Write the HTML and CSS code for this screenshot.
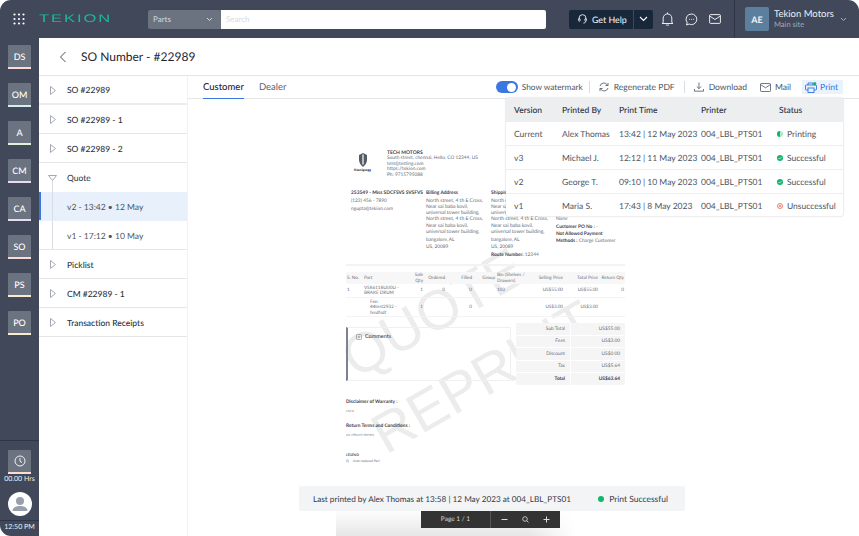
FILE: index.html
```html
<!DOCTYPE html>
<html>
<head>
    <title>SO Number - #22989</title>
    <link rel="stylesheet" href="styles.css">
</head>
<body>
<div class="app">
    <header class="topbar">
        <svg class="apps" width="12" height="12" viewBox="0 0 12 12" fill="#fff">
            <circle cx="1.5" cy="1.5" r="1.1"/><circle cx="6" cy="1.5" r="1.1"/><circle cx="10.5" cy="1.5" r="1.1"/>
            <circle cx="1.5" cy="6" r="1.1"/><circle cx="6" cy="6" r="1.1"/><circle cx="10.5" cy="6" r="1.1"/>
            <circle cx="1.5" cy="10.5" r="1.1"/><circle cx="6" cy="10.5" r="1.1"/><circle cx="10.5" cy="10.5" r="1.1"/>
        </svg>
        <div class="logo"><span>TEKION</span></div>
        <div class="search">
            <div class="search-type">Parts
                <svg width="7" height="5" viewBox="0 0 7 5" fill="none" stroke="#d5d8de"><path d="M1 1l2.5 2.5L6 1"/></svg>
            </div>
            <div class="search-input">Search</div>
        </div>
        <div class="help">
            <div class="help-main">
                <svg width="9" height="12" viewBox="0 0 10 12" fill="none" stroke="#e8eaee" stroke-width="1"><path d="M1.2 7V5a3.8 3.8 0 0 1 7.6 0v2"/><rect x=".7" y="5.5" width="1.6" height="3" rx=".7"/><rect x="7.7" y="5.5" width="1.6" height="3" rx=".7"/><path d="M8.5 8.5c0 1.5-1 2-2.5 2"/></svg>
                Get Help
            </div>
            <div class="help-arrow">
                <svg width="9" height="6" viewBox="0 0 9 6" fill="none" stroke="#fff" stroke-width="1.1"><path d="M1 1l3.5 3.5L8 1"/></svg>
            </div>
        </div>
        <div class="top-icons">
            <svg width="13" height="14" viewBox="0 0 13 14" fill="none" stroke="#fff" stroke-width=".9"><path d="M2.2 10.5V6.2a4.3 4.3 0 0 1 8.6 0v4.3l1.2 1H1z"/><path d="M5 12.5c.5 1 2.5 1 3 0"/><path d="M6.5 1.900V.5"/></svg>
            <svg width="13" height="13" viewBox="0 0 13 13" fill="none" stroke="#fff" stroke-width=".9"><path d="M6.5 1a5.300 5.300 0 0 1 0 10.600c-.9 0-1.700-.2-2.400-.6L1.500 12l.7-2.400A5.300 5.300 0 0 1 6.500 1z"/><path d="M4 6.300h.8M6.100 6.300h.8M8.200 6.300H9"/></svg>
            <svg width="12" height="10" viewBox="0 0 12 10" fill="none" stroke="#fff" stroke-width=".9"><rect x=".6" y=".6" width="10.800" height="8.800" rx="1"/><path d="M.6 2l5.400 3.500L11.400 2"/></svg>
        </div>
        <div class="dealer">
            <div class="dealer-badge">AE</div>
            <div class="dealer-text">
                <div class="dealer-name">Tekion Motors</div>
                <div class="dealer-site">Main site</div>
            </div>
            <svg width="7" height="5" viewBox="0 0 7 5" fill="none" stroke="#aab0ba"><path d="M1 1l2.500 2.500L6 1"/></svg>
        </div>
    </header>

    <div class="body-row">
        <nav class="sidebar">
            <div class="side-links">
                <a class="side-link pink">DS</a>
                <a class="side-link teal">OM</a>
                <a class="side-link green">A</a>
                <a class="side-link lilac">CM</a>
                <a class="side-link lilac">CA</a>
                <a class="side-link pink">SO</a>
                <a class="side-link cream">PS</a>
                <a class="side-link cream">PO</a>
            </div>
            <div class="side-bottom">
                <a class="side-link pink">
                    <svg width="12" height="12" viewBox="0 0 12 12" fill="none" stroke="#fff" stroke-width=".9"><circle cx="6" cy="6" r="5"/><path d="M6 3v3.200l2 1.300"/></svg>
                </a>
                <div class="hrs">00.00 Hrs</div>
                <div class="user">
                    <svg width="24" height="24" viewBox="0 0 24 24" fill="#9aa0ab"><circle cx="12" cy="9" r="4"/><path d="M4.500 19c0-3.500 3.500-5 7.500-5s7.500 1.500 7.500 5z"/></svg>
                </div>
                <div class="clock">12:50 PM</div>
            </div>
        </nav>

        <main class="content">
            <div class="page-head">
                <svg width="8" height="12" viewBox="0 0 8 12" fill="none" stroke="#444f5f" stroke-width="1"><path d="M6.500 1L1.500 6l5 5"/></svg>
                <h1>SO Number - #22989</h1>
            </div>
            <div class="page-body">
                <aside class="tree">
                    <div class="tree-row first"><svg class="tri" width="6" height="9" viewBox="0 0 6 9"><path d="M.5.5l5 4-5 4z"/></svg>SO #22989</div>
                    <div class="tree-row"><svg class="tri" width="6" height="9" viewBox="0 0 6 9"><path d="M.5.5l5 4-5 4z"/></svg>SO #22989 - 1</div>
                    <div class="tree-row"><svg class="tri" width="6" height="9" viewBox="0 0 6 9"><path d="M.5.5l5 4-5 4z"/></svg>SO #22989 - 2</div>
                    <div class="tree-row open"><svg class="tri-down" width="9" height="6" viewBox="0 0 9 6"><path d="M.5.500h8l-4 5z"/></svg>Quote</div>
                    <div class="tree-row sub active">v2 - 13:42 • 12 May</div>
                    <div class="tree-row sub">v1 - 17:12 • 10 May</div>
                    <div class="tree-row"><svg class="tri" width="6" height="9" viewBox="0 0 6 9"><path d="M.5.5l5 4-5 4z"/></svg>Picklist</div>
                    <div class="tree-row"><svg class="tri" width="6" height="9" viewBox="0 0 6 9"><path d="M.5.5l5 4-5 4z"/></svg>CM #22989 - 1</div>
                    <div class="tree-row"><svg class="tri" width="6" height="9" viewBox="0 0 6 9"><path d="M.5.5l5 4-5 4z"/></svg>Transaction Receipts</div>
                </aside>

                <section class="viewer">
                    <div class="tabbar">
                        <a class="tab on">Customer</a>
                        <a class="tab">Dealer</a>
                        <div class="actions">
                            <span class="toggle"><span class="knob"></span></span>
                            <span class="act watermark">Show watermark</span>
                            <span class="act-sep sep-a"></span>
                            <span class="act">
                                <svg width="10" height="10" viewBox="0 0 10 10" fill="none" stroke="#4b5563" stroke-width=".8"><path d="M1 4a4 4 0 0 1 7-1.500L9 3.500M9 1v2.500H6.500"/><path d="M9 6a4 4 0 0 1-7 1.500L1 6.500M1 9V6.500h2.500"/></svg>
                                Regenerate PDF
                            </span>
                            <span class="act-sep sep-b"></span>
                            <span class="act">
                                <svg width="10" height="10" viewBox="0 0 10 10" fill="none" stroke="#4b5563" stroke-width=".8"><path d="M5 .5v6M2.800 4.500L5 6.700l2.200-2.200M.5 7v2.200h9V7"/></svg>
                                Download
                            </span>
                            <span class="act mail">
                                <svg width="11" height="9" viewBox="0 0 11 9" fill="none" stroke="#4b5563" stroke-width=".8"><rect x=".5" y=".5" width="10" height="8" rx=".8"/><path d="M.5 1.500l5 3.300 5-3.300"/></svg>
                                Mail
                            </span>
                            <span class="act print">
                                <svg width="12" height="11" viewBox="0 0 12 11" fill="none" stroke="#2f74e0" stroke-width=".9"><path d="M3 3V1h5v2"/><rect x=".5" y="3" width="11" height="5" rx="1"/><rect x="3" y="6" width="6" height="4.500" fill="#eaf2fd"/><circle cx="9.700" cy="1.800" r="1.700" fill="#12b76a" stroke="none"/></svg>
                                Print
                            </span>
                        </div>
                    </div>

                    <div class="doc-area">
                        <div class="mark mark-quote">QUOTE</div>
                        <div class="mark mark-reprint">REPRINT</div>
                        <div class="doc">
                            <div class="doc-head">
                                <div class="doc-logo">
                                    <svg width="8" height="14" viewBox="0 0 8 14" fill="#555b66"><path d="M4 0l4 2v5c0 3-2 5-4 7-2-2-4-4-4-7V2z"/><path d="M3.400 1.500h1.200v10H3.400z" fill="#fff"/></svg>
                                    <b>Koenigsegg</b>
                                </div>
                                <div class="doc-org">
                                    <b>TECH MOTORS</b>
                                    <div>South street, chennai, Hello, CO 12344, US</div>
                                    <div>tets@testing.com</div>
                                    <div>https://tekion.com</div>
                                    <div>Ph: 9715795088</div>
                                </div>
                            </div>
                            <div class="doc-cols">
                                <div class="doc-col">
                                    <b>253549 - Miss SDCFSVS SVSFVS</b>
                                    <p class="gap-a">(123) 456 - 7890</p>
                                    <p class="gap-b">ngupta@tekion.com</p>
                                </div>
                                <div class="doc-col">
                                    <b>Billing Address</b>
                                    <div class="addr">
                                        <div>North street, 4 th E Cross,</div>
                                        <div>Near sai baba kovil,</div>
                                        <div>universal tower building,</div>
                                        <div>North street, 4 th E Cross,</div>
                                        <div>Near sai baba kovil,</div>
                                        <div>universal tower building,</div>
                                    </div>
                                    <p class="gap-b">bangalore, AL</p>
                                    <p class="gap-b">US, 20089</p>
                                </div>
                                <div class="doc-col">
                                    <b>Shipping Address</b>
                                    <div class="addr">
                                        <div>North street, 4 th E Cross,</div>
                                        <div>Near sai baba kovil,</div>
                                        <div>universal tower building,</div>
                                        <div>North street, 4 th E Cross,</div>
                                        <div>Near sai baba kovil,</div>
                                        <div>universal tower building,</div>
                                    </div>
                                    <p class="gap-b">bangalore, AL</p>
                                    <p class="gap-b">US, 20089</p>
                                    <p class="gap-b"><b>Route Number:</b> 12344</p>
                                </div>
                                <div class="doc-col last">
                                    <p>None</p>
                                    <p class="gap-b"><b>Customer PO No :</b> -</p>
                                    <p class="gap-b"><b>Not Allowed Payment</b></p>
                                    <p class="gap-c"><b>Methods :</b> Charge Customer</p>
                                </div>
                            </div>
                            <div class="doc-rule"></div>
                            <table class="parts">
                                <tr class="parts-head">
                                    <th class="c-no">S. No.</th><th class="c-part">Part</th><th class="num c-qty">Sale<br>Qty</th><th class="num c-ord">Ordered</th><th class="num c-fil">Filled</th><th class="num c-grp">Group</th><th class="c-bin">Bin (Shelves /<br>Drawers)</th><th class="num c-sell">Selling Price</th><th class="num c-tot">Total Price</th><th class="num c-ret">Return Qty</th>
                                </tr>
                                <tr>
                                    <td>1</td><td>VSX6118UIJ0U -<br>BRAKE DRUM</td><td class="num">1</td><td class="num">0</td><td class="num">0</td><td></td><td>103</td><td class="num">US$55.00</td><td class="num">US$55.00</td><td class="num">0</td>
                                </tr>
                                <tr>
                                    <td></td><td class="fee">Fee:<br>44test2932 -<br>fesdfsdf</td><td class="num">1</td><td></td><td class="num">0</td><td></td><td></td><td class="num">US$3.00</td><td class="num">US$3.00</td><td></td>
                                </tr>
                            </table>
                            <div class="doc-sum">
                                <div class="comments">
                                    <svg width="6" height="6" viewBox="0 0 6 6" fill="none" stroke="#666" stroke-width=".5"><rect x=".5" y=".5" width="5" height="5" rx=".8"/><path d="M1.800 2.300h2.400M1.800 3.700h2.400"/></svg>
                                    Comments
                                </div>
                                <div class="totals">
                                    <div class="tot-row"><span>Sub Total</span><span>US$55.00</span></div>
                                    <div class="tot-row"><span>Fees</span><span>US$3.00</span></div>
                                    <div class="tot-row"><span>Discount</span><span>US$0.00</span></div>
                                    <div class="tot-row"><span>Tax</span><span>US$5.64</span></div>
                                    <div class="tot-row grand"><span>Total</span><span>US$63.64</span></div>
                                </div>
                            </div>
                            <div class="doc-notes">
                                <b>Disclaimer of Warranty :</b>
                                <p>csca</p>
                                <b>Return Terms and Conditions :</b>
                                <p>us return terms</p>
                                <b class="legend">LEGEND</b>
                                <div class="legend-row"><span>Q</span>Auto replaced Part</div>
                            </div>
                        </div>
                        <div class="page-fade"></div>
                    </div>

                    <div class="print-pop">
                        <table>
                            <tr><th>Version</th><th>Printed By</th><th>Print Time</th><th>Printer</th><th>Status</th></tr>
                            <tr><td>Current</td><td>Alex Thomas</td><td>13:42 | 12 May 2023</td><td>004_LBL_PTS01</td><td><svg class="st" width="6" height="6" viewBox="0 0 6 6"><circle cx="3" cy="3" r="3" fill="#a9ecc9"/><path d="M3 0a3 3 0 0 0 0 6z" fill="#12b76a"/></svg>Printing</td></tr>
                            <tr><td>v3</td><td>Michael J.</td><td>12:12 | 11 May 2023</td><td>004_LBL_PTS01</td><td><svg class="st" width="6" height="6" viewBox="0 0 6 6"><circle cx="3" cy="3" r="3" fill="#12b76a"/><path d="M1.600 3.100l1 1 1.800-2" fill="none" stroke="#fff" stroke-width=".7"/></svg>Successful</td></tr>
                            <tr><td>v2</td><td>George T.</td><td>09:10 | 10 May 2023</td><td>004_LBL_PTS01</td><td><svg class="st" width="6" height="6" viewBox="0 0 6 6"><circle cx="3" cy="3" r="3" fill="#12b76a"/><path d="M1.600 3.100l1 1 1.800-2" fill="none" stroke="#fff" stroke-width=".7"/></svg>Successful</td></tr>
                            <tr><td>v1</td><td>Maria S.</td><td>17:43 | 8 May 2023</td><td>004_LBL_PTS01</td><td><svg class="st" width="6" height="6" viewBox="0 0 6 6"><circle cx="3" cy="3" r="2.600" fill="#fde3df" stroke="#ef6a5e" stroke-width=".7"/><path d="M1.900 1.900l2.200 2.200M4.100 1.900L1.900 4.100" stroke="#ef6a5e" stroke-width=".6"/></svg>Unsuccessful</td></tr>
                        </table>
                    </div>

                    <div class="toast">
                        <span>Last printed by Alex Thomas at 13:58 | 12 May 2023 at 004_LBL_PTS01</span>
                        <span class="toast-status"><i></i>Print Successful</span>
                    </div>
                    <div class="pager">
                        <span class="pager-label">Page 1 / 1</span>
                        <span class="pager-tools">
                            <svg width="7" height="7" viewBox="0 0 7 7" stroke="#ddd"><path d="M.5 3.500h6"/></svg>
                            <svg width="7" height="7" viewBox="0 0 7 7" fill="none" stroke="#ddd" stroke-width=".8"><circle cx="3" cy="3" r="2.300"/><path d="M4.700 4.700L6.500 6.500"/></svg>
                            <svg width="7" height="7" viewBox="0 0 7 7" stroke="#ddd"><path d="M.5 3.500h6M3.500.5v6"/></svg>
                        </span>
                    </div>
                </section>
            </div>
        </main>
    </div>
</div>
</body>
</html>
```
FILE: styles.css
```css
body {
    margin: 0;
    background: #fff;
    font-family: 'Lato', 'Open Sans', sans-serif;
    color: #2b3240;
    text-rendering: geometricPrecision;
}

.app {
    width: 859px;
    height: 536px;
    display: flex;
    flex-direction: column;
    overflow: hidden;
    background: #404859;
    border-radius: 11px 11px 0 11px;
}

/* top bar */
.topbar {
    height: 38px;
    flex: none;
    display: flex;
    align-items: center;
    padding-left: 13px;
}

.logo {
    width: 72px;
    margin-left: 14px;
    color: #1fb89c;
    font-family: 'Liberation Sans', sans-serif;
    font-size: 11px;
    letter-spacing: 1.3px;
    white-space: nowrap;
}

.logo span {
    display: inline-block;
    transform: scaleX(1.5);
    transform-origin: left center;
}

.search {
    display: flex;
    height: 19px;
    margin-left: 37px;
    font-size: 8px;
}

.search-type {
    width: 73px;
    box-sizing: border-box;
    padding: 0 8px 0 5px;
    display: flex;
    align-items: center;
    justify-content: space-between;
    background: #6b7280;
    color: #d5d8de;
    border-radius: 2px 0 0 2px;
}

.search-input {
    width: 325px;
    box-sizing: border-box;
    padding-left: 5px;
    display: flex;
    align-items: center;
    background: #fff;
    color: #d8dbe0;
    border-radius: 0 2px 2px 0;
}

.help {
    display: flex;
    height: 19px;
    margin-left: 23px;
    color: #e8eaee;
    font-size: 8.800px;
    font-weight: 500;
}

.help-main {
    width: 64px;
    box-sizing: border-box;
    padding-left: 9px;
    display: flex;
    align-items: center;
    gap: 5px;
    background: #18283a;
    border-radius: 2px 0 0 2px;
}

.help-arrow {
    width: 19px;
    margin-left: 1px;
    display: flex;
    align-items: center;
    justify-content: center;
    background: #18283a;
    border-radius: 0 2px 2px 0;
}

.top-icons {
    display: flex;
    align-items: center;
    gap: 11px;
    margin-left: 8px;
}

.dealer {
    height: 38px;
    box-sizing: border-box;
    margin-left: 13px;
    padding-left: 10px;
    display: flex;
    align-items: center;
    border-left: 1px solid #2e3544;
}

.dealer-badge {
    width: 24px;
    height: 24px;
    display: flex;
    align-items: center;
    justify-content: center;
    background: #5d7f9e;
    color: #eef1f4;
    font-size: 9px;
    font-weight: 700;
    border-radius: 2px;
}

.dealer-text {
    width: 66px;
    margin-left: 5px;
}

.dealer-name {
    color: #eef0f3;
    font-size: 9.500px;
    line-height: 11px;
    white-space: nowrap;
}

.dealer-site {
    color: #a5abb6;
    font-size: 7.500px;
    line-height: 9px;
}

/* side nav */
.body-row {
    flex: 1;
    display: flex;
    min-height: 0;
}

.sidebar {
    width: 39px;
    flex: none;
    display: flex;
    flex-direction: column;
    justify-content: space-between;
    padding-top: 7px;
    box-sizing: border-box;
}

.side-links {
    display: flex;
    flex-direction: column;
    gap: 14px;
    align-items: center;
}

.side-link {
    width: 23px;
    height: 24px;
    box-sizing: border-box;
    display: flex;
    align-items: center;
    justify-content: center;
    background: #6b7280;
    color: #fff;
    font-size: 9px;
    font-weight: 500;
    border-bottom: 2px solid #fff;
    border-radius: 1px 1px 0 0;
}

.pink { border-color: #fbdcd6; }
.teal { border-color: #d2f0ee; }
.green { border-color: #dff2dc; }
.lilac { border-color: #ead9f3; }
.cream { border-color: #f8ebd0; }

.side-bottom {
    display: flex;
    flex-direction: column;
    align-items: center;
    border-top: 1px solid #2e3544;
    padding-top: 9px;
}

.hrs {
    margin: 1px 0 8px;
    color: #eef0f3;
    font-size: 7px;
    line-height: 9px;
    white-space: nowrap;
}

.user {
    width: 24px;
    height: 24px;
    overflow: hidden;
    background: #fff;
    border-radius: 50%;
}

.clock {
    width: 100%;
    margin-top: 4px;
    padding: 3px 0 5px;
    text-align: center;
    color: #eef0f3;
    font-size: 7px;
    line-height: 7px;
    border-top: 1px solid #2e3544;
}

/* main */
.content {
    flex: 1;
    min-width: 0;
    display: flex;
    flex-direction: column;
    background: #fff;
}

.page-head {
    height: 38px;
    flex: none;
    box-sizing: border-box;
    padding-left: 20px;
    display: flex;
    align-items: center;
    border-bottom: 1px solid #e4e6ea;
}

.page-head h1 {
    margin: 0 0 0 14px;
    font-size: 12px;
    font-weight: 400;
    color: #1f2633;
}

.page-body {
    flex: 1;
    display: flex;
    min-height: 0;
}

.tree {
    width: 149px;
    flex: none;
    box-sizing: border-box;
    border-right: 1px solid #f1f2f4;
}

.tree-row {
    height: 29px;
    box-sizing: border-box;
    padding: 1px 0 0 28px;
    display: flex;
    align-items: center;
    position: relative;
    font-size: 8.500px;
    font-weight: 500;
    color: #2b3240;
    border-bottom: 1px solid #e4e6ea;
}

.tree-row.first {
    border-bottom: 2px solid #ededf0;
}

.tree-row.open {
    border-bottom: 0;
    font-weight: 400;
}

.tree-row.sub {
    font-weight: 400;
    color: #4b5563;
}

.tree-row.sub::before,
.tree-row.open::before {
    content: '';
    position: absolute;
    left: 13px;
    top: 0;
    bottom: 0;
    border-left: 1px solid #d9dce1;
}

.tree-row.open::before {
    top: 18px;
}

.tree-row.active {
    background: #e8f0fc;
    border-bottom-color: #e8f0fc;
    box-shadow: inset 2px 0 0 #3a77e0;
}

.tri,
.tri-down {
    flex: none;
    fill: #fff;
    stroke: #9aa0ab;
    stroke-width: .9;
}

.tri {
    margin: 0 11px 0 -17px;
}

.tri-down {
    margin: -1px 10px 0 -19px;
}

/* viewer */
.viewer {
    flex: 1;
    min-width: 0;
    position: relative;
    overflow: hidden;
}

.tabbar {
    height: 23px;
    box-sizing: border-box;
    padding-left: 15px;
    display: flex;
    border-bottom: 1px solid #e4e6ea;
}

.tab {
    height: 23px;
    box-sizing: border-box;
    margin-right: 15px;
    display: flex;
    align-items: center;
    font-size: 9.500px;
    color: #5b6472;
}

.tab.on {
    color: #1f2633;
    font-weight: 500;
    border-bottom: 1px solid #3a77e0;
}

.actions {
    margin-left: auto;
    margin-right: 16px;
    display: flex;
    align-items: center;
    font-size: 8.500px;
    color: #4b5563;
}

.toggle {
    width: 22px;
    height: 12px;
    position: relative;
    background: #3a77e0;
    border-radius: 6px;
}

.knob {
    position: absolute;
    right: 1.500px;
    top: 1.500px;
    width: 9px;
    height: 9px;
    background: #fff;
    border-radius: 50%;
}

.act {
    display: flex;
    align-items: center;
    gap: 5px;
}

.watermark {
    margin-left: 4px;
    font-size: 8.300px;
}

.act-sep {
    width: 1px;
    height: 12px;
    background: #d9dce1;
}

.sep-a { margin: 0 9px 0 6px; }
.sep-b { margin: 0 9px 0 9px; }

.mail {
    margin-left: 13px;
    gap: 4px;
}

.print {
    margin-left: 11px;
    padding: 0 5px 0 3px;
    height: 14px;
    gap: 3px;
    background: #eaf2fd;
    color: #2f74e0;
}

/* pdf page */
.doc-area {
    position: relative;
    height: 437px;
}

.doc {
    position: relative;
    width: 279px;
    margin-left: 158px;
    padding-top: 51px;
    font-size: 4.800px;
    line-height: 6px;
    color: #666d78;
}

.doc b {
    color: #3a404b;
}

.doc p {
    margin: 0;
}

.doc-head {
    display: flex;
}

.doc-logo {
    width: 41px;
    box-sizing: border-box;
    padding: 3px 14px 0 6px;
    display: flex;
    flex-direction: column;
    align-items: center;
    font-size: 3.300px;
    line-height: 4px;
    white-space: nowrap;
}

.doc-logo b {
    margin-top: 1px;
    color: #14181f;
}

.doc-org b {
    font-size: 5px;
}

.doc-org div {
    line-height: 5.600px;
}

.doc-cols {
    display: grid;
    grid-template-columns: 75px 65px 65px 1fr;
    margin: 12px 0 0 5px;
    white-space: nowrap;
}

.doc-col > b {
    font-size: 4.900px;
}

.gap-a { padding-top: 2px; }
.gap-b { padding-top: 1.500px; }
.gap-c { padding-top: 1px; }

.addr {
    font-size: 5px;
    line-height: 6.200px;
    padding-top: 1.500px;
}

.doc-col.last {
    padding-top: 26px;
}

.doc-rule {
    height: 2px;
    margin-top: 6px;
    background: #f3f3f4;
}

.parts {
    width: 279px;
    margin-top: 6px;
    border-collapse: collapse;
    table-layout: fixed;
    font-size: 4.600px;
    line-height: 5.500px;
}

.parts th {
    height: 12px;
    box-sizing: border-box;
    padding: 0 1px;
    font-weight: 400;
    text-align: left;
    background: #f7f7f8;
}

.parts td {
    padding: 1px;
    vertical-align: middle;
    border-bottom: 1px solid #f3f3f4;
}

.parts .num {
    text-align: right;
}

.c-no { width: 17px; }
.c-part { width: 44px; }
.c-qty { width: 17px; }
.c-ord { width: 22px; }
.c-fil { width: 27px; }
.c-grp { width: 23px; }
.c-bin { width: 32px; }
.c-sell { width: 36px; }
.c-tot { width: 35px; }

.parts .fee {
    padding-left: 7px;
}

.doc-sum {
    display: flex;
    align-items: flex-start;
    justify-content: space-between;
    margin-top: 6px;
}

.comments {
    width: 165px;
    height: 54px;
    margin-top: 4px;
    box-sizing: border-box;
    padding: 6px 0 0 8px;
    display: flex;
    align-items: flex-start;
    gap: 3px;
    border: 1px solid #f0f0f2;
    border-left: 2px solid #7b8290;
    font-size: 5.500px;
    font-weight: 500;
    color: #3a404b;
}

.totals {
    width: 109px;
}

.tot-row {
    height: 12.500px;
    display: flex;
    align-items: center;
    border-bottom: 1px solid #fff;
    box-sizing: border-box;
    background: linear-gradient(90deg, #f5f5f6 54px, #fff 54px, #fff 55px, #f5f5f6 55px);
}

.tot-row span {
    width: 49px;
    text-align: right;
}

.tot-row span + span {
    width: 55px;
}

.grand {
    font-weight: 700;
    color: #3a404b;
}

.doc-notes {
    margin-top: 13px;
}

.doc-notes p {
    margin: 3px 0 9px;
    font-size: 4.200px;
    color: #8a909a;
}

.doc-notes b {
    display: block;
}

.doc-notes .legend {
    margin-top: 14px;
    font-size: 3.300px;
}

.legend-row {
    font-size: 3.300px;
    display: flex;
    gap: 4px;
}

/* watermarks sit behind the page text */
.mark {
    position: absolute;
    color: #ececec;
    font-family: 'Liberation Sans', sans-serif;
    font-size: 56px;
    line-height: 56px;
    white-space: nowrap;
    transform: translate(-50%, -50%) rotate(-30deg);
}

.mark-quote {
    left: 245px;
    top: 214px;
}

.mark-reprint {
    left: 295px;
    top: 278px;
}

.page-fade {
    position: absolute;
    left: 148px;
    top: 410px;
    width: 240px;
    height: 27px;
    background: linear-gradient(#fff, #e6e6e6);
    -webkit-mask-image: linear-gradient(90deg, #000 80%, transparent);
}

/* print history popup */
.print-pop {
    position: absolute;
    left: 318px;
    top: 22px;
    width: 337px;
    height: 118px;
    overflow: hidden;
    background: #fff;
    border-radius: 2px;
    box-shadow: 0 0 2px rgba(0, 0, 0, .25);
}

.print-pop table {
    width: 100%;
    border-collapse: collapse;
    table-layout: fixed;
    font-size: 8.500px;
    color: #4b5563;
}

.print-pop th {
    height: 24px;
    padding: 0 0 0 8px;
    font-weight: 500;
    text-align: left;
    color: #2b3240;
    background: #eceef0;
}

.print-pop th:nth-child(1) { width: 40px; }
.print-pop th:nth-child(2) { width: 49px; }
.print-pop th:nth-child(3) { width: 74px; }
.print-pop th:nth-child(4) { width: 70px; }

.print-pop td {
    height: 23px;
    padding: 0 0 0 8px;
    white-space: nowrap;
    border-bottom: 1px solid #eceef0;
}

.print-pop td:last-child {
    padding-left: 6px;
}

.st {
    margin-right: 4px;
    vertical-align: -0.500px;
}

/* bottom strip */
.toast {
    position: absolute;
    left: 111px;
    top: 410px;
    width: 386px;
    height: 25px;
    box-sizing: border-box;
    padding: 0 17px 0 14px;
    display: flex;
    align-items: center;
    justify-content: space-between;
    background: #f3f4f6;
    font-size: 8.200px;
    color: #343b48;
    border-radius: 2px;
}

.toast-status {
    display: flex;
    align-items: center;
    gap: 5px;
    font-size: 8.500px;
}

.toast-status i {
    width: 6px;
    height: 6px;
    background: #12b76a;
    border-radius: 50%;
}

.pager {
    position: absolute;
    left: 233px;
    top: 435px;
    width: 139px;
    height: 17px;
    display: flex;
    align-items: center;
    background: #333;
    color: #ddd;
    font-size: 6.500px;
}

.pager-label {
    width: 69px;
    text-align: center;
    line-height: 17px;
    border-right: 1px solid #555;
}

.pager-tools {
    flex: 1;
    display: flex;
    align-items: center;
    justify-content: space-around;
    padding: 0 3px;
}
```
